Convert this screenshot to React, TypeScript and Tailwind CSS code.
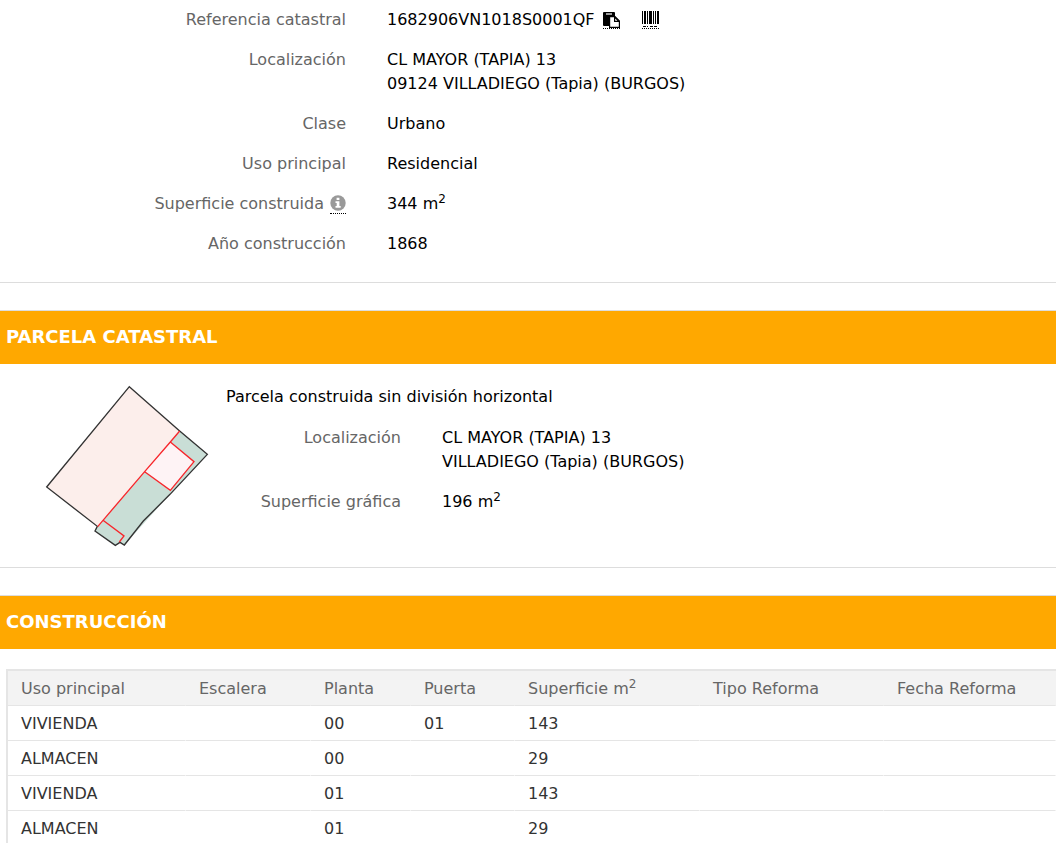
import type { ReactNode } from "react";

type Field = { label: ReactNode; value: ReactNode };

const buildings = [
  { use: "VIVIENDA", stair: "", floor: "00", door: "01", area: "143" },
  { use: "ALMACEN", stair: "", floor: "00", door: "", area: "29" },
  { use: "VIVIENDA", stair: "", floor: "01", door: "", area: "143" },
  { use: "ALMACEN", stair: "", floor: "01", door: "", area: "29" },
];

function PasteIcon() {
  return (
    <svg viewBox="0 0 17 17" className="block h-[17px] w-full" aria-hidden="true">
      <path d="M0 2Q0 1 1 1H11Q12 1 12 2V5H6V15H1Q0 15 0 14Z" fill="#000" />
      <path d="M3 2H9V4H3Z" fill="#999" />
      <path d="M6.6 5.6H12L16.4 10V16.4H6.6Z" fill="#fff" stroke="#000" strokeWidth="1.2" />
      <path d="M11 5.6H12L16.4 10V11H11Z" fill="#000" />
      <path d="M12.2 7.6V9.8H14.4Z" fill="#fff" />
    </svg>
  );
}

function BarcodeIcon() {
  return (
    <svg viewBox="0 0 17 17" className="block h-[17px] w-full" aria-hidden="true">
      <path
        d="M0 0H1V13H0ZM2 0H4V13H2ZM5 0H6V13H5ZM7 0H10V13H7ZM11 0H12V13H11ZM13 0H14V13H13ZM15 0H17V13H15Z"
        fill="#000"
      />
      <path d="M1 15H4V16H1ZM5 15H6V16H5ZM8 15H11V16H8ZM12 15H15V16H12Z" fill="#000" />
    </svg>
  );
}

function InfoIcon() {
  return (
    <svg viewBox="0 0 16 16" className="block h-4 w-4" aria-hidden="true">
      <circle cx="8" cy="8" r="7.7" fill="#999" />
      <path d="M6.6 2.8H9.4V5H6.6ZM5.5 6.3H9.4V11H10.7V12.7H5.5V11H6.7V8H5.5Z" fill="#fff" />
    </svg>
  );
}

function ParcelPlan() {
  return (
    <svg viewBox="45 30 492 486" className="h-[162px] w-[164px] shrink-0" role="img" aria-label="Croquis de la parcela">
      <path d="M298 35L449 168L203 455L50 336Z" fill="#fceeeb" />
      <path d="M449 168L532 238L420 358L283 510L270 502L256 511L195 468L203 455Z" fill="#c9ded6" />
      <path d="M421 201L492 260L421 346L344 290Z" fill="#fef3f5" />
      <path
        d="M298 35L449 168L532 238L420 358L340 438L283 510L270 502L256 511L195 468L202 454L50 336Z"
        fill="none"
        stroke="#333"
        strokeWidth="4"
      />
      <path
        d="M449 168L421 201L344 290L219 436L203 455M421 201L492 260L421 346L344 290M219 436L282 483L268 501"
        fill="none"
        stroke="#f8262b"
        strokeWidth="4"
      />
    </svg>
  );
}

function FieldList({ fields, columns }: { fields: Field[]; columns: string }) {
  return (
    <dl className="flex flex-col gap-4">
      {fields.map((field, i) => (
        <div key={i} className={`grid gap-x-[41px] ${columns}`}>
          <dt className="text-right text-[#666]">{field.label}</dt>
          <dd>{field.value}</dd>
        </div>
      ))}
    </dl>
  );
}

function SectionTitle({ children }: { children: ReactNode }) {
  return (
    <h2 className="border-t border-[#ddd] bg-[#ffa800] px-1.5 pt-[14px] pb-[15px] text-lg leading-6 font-bold text-white">
      {children}
    </h2>
  );
}

const squareMetres = (
  <>
    m<sup>2</sup>
  </>
);

const propertyFields: Field[] = [
  {
    label: "Referencia catastral",
    value: (
      <span className="flex h-6 items-center">
        1682906VN1018S0001QF
        <button type="button" aria-label="Copiar" className="ml-2 w-[17px] border-b border-dotted border-black">
          <PasteIcon />
        </button>
        <button type="button" aria-label="Código de barras" className="ml-[22px] w-[17px] border-b border-dotted border-black">
          <BarcodeIcon />
        </button>
      </span>
    ),
  },
  {
    label: "Localización",
    value: (
      <>
        CL MAYOR (TAPIA) 13
        <br />
        09124 VILLADIEGO (Tapia) (BURGOS)
      </>
    ),
  },
  { label: "Clase", value: "Urbano" },
  { label: "Uso principal", value: "Residencial" },
  {
    label: (
      <span className="flex h-6 items-center justify-end gap-1.5">
        Superficie construida
        <button type="button" aria-label="Información" className="border-b border-dotted border-black pb-0.5">
          <InfoIcon />
        </button>
      </span>
    ),
    value: <>344 {squareMetres}</>,
  },
  { label: "Año construcción", value: "1868" },
];

const parcelFields: Field[] = [
  {
    label: "Localización",
    value: (
      <>
        CL MAYOR (TAPIA) 13
        <br />
        VILLADIEGO (Tapia) (BURGOS)
      </>
    ),
  },
  { label: "Superficie gráfica", value: <>196 {squareMetres}</> },
];

const headers: { label: ReactNode; width: string }[] = [
  { label: "Uso principal", width: "w-[178px]" },
  { label: "Escalera", width: "w-[125px]" },
  { label: "Planta", width: "w-[100px]" },
  { label: "Puerta", width: "w-[104px]" },
  { label: <>Superficie {squareMetres}</>, width: "w-[185px]" },
  { label: "Tipo Reforma", width: "w-[184px]" },
  { label: "Fecha Reforma", width: "" },
];

export default function App() {
  return (
    <main className="bg-white font-['DejaVu_Sans',Verdana,sans-serif] text-base leading-6 text-black">
      <section className="border-b border-[#ddd] pt-2 pb-[26px]">
        <FieldList fields={propertyFields} columns="grid-cols-[346px_minmax(0,1fr)]" />
      </section>

      <section className="mt-[27px] border-b border-[#ddd]">
        <SectionTitle>PARCELA CATASTRAL</SectionTitle>
        <div className="flex gap-[17px] pt-[21px] pb-5 pl-[45px]">
          <ParcelPlan />
          <div className="flex min-w-0 grow flex-col gap-[17px]">
            <p>Parcela construida sin división horizontal</p>
            <FieldList fields={parcelFields} columns="grid-cols-[175px_minmax(0,1fr)]" />
          </div>
        </div>
      </section>

      <section className="mt-[27px]">
        <SectionTitle>CONSTRUCCIÓN</SectionTitle>
        <div className="mt-5 ml-1.5 border-t-2 border-l-2 border-[#e5e5e5]">
          <table className="w-full table-fixed border-separate border-spacing-0 text-left">
            <thead>
              <tr>
                {headers.map((header, i) => (
                  <th
                    key={i}
                    scope="col"
                    className={`h-[35px] border-r border-b border-r-[#f3f3f3] border-b-[#e5e5e5] bg-[#f3f3f3] pt-0.5 pb-0 pl-[13px] font-normal whitespace-nowrap text-[#666] ${header.width}`}
                  >
                    {header.label}
                  </th>
                ))}
              </tr>
            </thead>
            <tbody>
              {buildings.map((b, i) => (
                <tr key={i}>
                  {[b.use, b.stair, b.floor, b.door, b.area, "", ""].map((cell, j) => (
                    <td
                      key={j}
                      className="h-[35px] border-r border-b border-r-white border-b-[#e5e5e5] pt-0.5 pb-0 pl-[13px] text-[#333]"
                    >
                      {cell}
                    </td>
                  ))}
                </tr>
              ))}
            </tbody>
          </table>
        </div>
      </section>
    </main>
  );
}
